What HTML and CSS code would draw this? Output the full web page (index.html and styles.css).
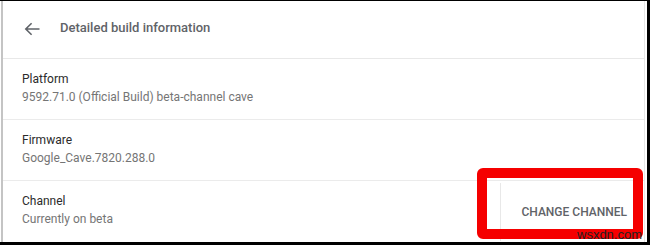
FILE: index.html
```html
<!DOCTYPE html>
<html lang="en">
<head>
    <meta charset="UTF-8">
    <meta name="viewport" content="width=device-width, initial-scale=1.0">
    <title>Detailed build information</title>
    <link rel="stylesheet" href="styles.css">
</head>
<body>
    <div class="frame">
        <div class="page">
            <div class="header">
                <svg class="back" width="16" height="14" viewBox="0 0 16 14">
                    <path d="M15.5 7H1.8M7.6 1.2L1.8 7l5.8 5.8" fill="none" stroke="#5f6368" stroke-width="1.6"/>
                </svg>
                <h1 class="title">Detailed build information</h1>
            </div>
            <div class="row">
                <div class="row-text">
                    <div class="label">Platform</div>
                    <div class="value">9592.71.0 (Official Build) beta-channel cave</div>
                </div>
            </div>
            <div class="row">
                <div class="row-text">
                    <div class="label">Firmware</div>
                    <div class="value">Google_Cave.7820.288.0</div>
                </div>
            </div>
            <div class="row last">
                <div class="row-text">
                    <div class="label">Channel</div>
                    <div class="value">Currently on beta</div>
                </div>
                <div class="action">
                    <button class="btn-text">Change channel</button>
                </div>
            </div>
        </div>
        <!-- red highlight drawn over the screenshot -->
        <div class="highlight"></div>
        <div class="watermark">wsxdn.com</div>
    </div>
</body>
</html>
```

FILE: styles.css
```css
html, body { margin: 0; padding: 0; background: #fff; }
body { font-family: Roboto, "Noto Sans", sans-serif; }

.frame {
    position: relative;
    box-sizing: border-box;
    width: 650px;
    height: 245px;
    padding-left: 1px;
    border-top: 1px solid #000;
    border-right: 3px solid #000;
    border-bottom: 3px solid #000;
    overflow: hidden;
}
.page {
    height: 100%;
    margin-right: 2px;
    border-left: 2px solid #c4c4c4;
    border-right: 1px solid #e6e6e6;
}

.header {
    display: flex;
    align-items: center;
    box-sizing: border-box;
    height: 58px;
    padding: 0 0 4px 21px;
    border-bottom: 1px solid #e8e8e8;
}
.back { margin-top: 3px; }
.title {
    margin: 0 0 0 20px;
    font-size: 13px;
    font-weight: 500;
    color: #5f6368;
}

.row {
    display: flex;
    padding-left: 19px;
    border-bottom: 1px solid #ebebeb;
}
.row.last { border-bottom: none; }
.row-text {
    flex: 1;
    padding: 11px 0 13px;
    font-size: 12px;
    line-height: 18px;
}
.label { color: #2b2b2b; }
.value { color: #757575; }

.action {
    display: flex;
    align-items: center;
    margin-top: 2px;
    padding: 0 17px 0 20px;
    border-left: 1px solid #e8e8e8;
}
.btn-text {
    padding: 0;
    border: none;
    background: none;
    font-family: Roboto, sans-serif;
    font-size: 12px;
    font-weight: 500;
    text-transform: uppercase;
    color: #5f6368;
}

.highlight {
    position: absolute;
    left: 477px;
    top: 167px;
    box-sizing: border-box;
    width: 166px;
    height: 71px;
    border: 10px solid #f50000;
    border-radius: 6px;
}
.watermark {
    position: absolute;
    left: 577px;
    top: 227px;
    font-family: "Liberation Sans", Arial, sans-serif;
    font-size: 13px;
    line-height: 13px;
    color: #222;
}
```
